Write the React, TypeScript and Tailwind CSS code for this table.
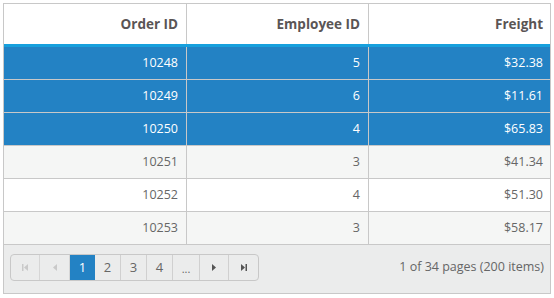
import React from "react";

const rows = [
  { id: "10248", emp: "5", fr: "$32.38", sel: true },
  { id: "10249", emp: "6", fr: "$11.61", sel: true },
  { id: "10250", emp: "4", fr: "$65.83", sel: true },
  { id: "10251", emp: "3", fr: "$41.34", sel: false, alt: true },
  { id: "10252", emp: "4", fr: "$51.30", sel: false, alt: false },
  { id: "10253", emp: "3", fr: "$58.17", sel: false, alt: true },
];

const FirstIcon = ({ c }: { c: string }) => (
  <svg width="6" height="7" viewBox="0 0 6 7">
    <rect x="0" y="0" width="1.5" height="7" fill={c} />
    <path d="M6 0 L2 3.5 L6 7 Z" fill={c} />
  </svg>
);
const PrevIcon = ({ c }: { c: string }) => (
  <svg width="4" height="7" viewBox="0 0 4 7">
    <path d="M4 0 L0 3.5 L4 7 Z" fill={c} />
  </svg>
);
const NextIcon = ({ c }: { c: string }) => (
  <svg width="4" height="7" viewBox="0 0 4 7">
    <path d="M0 0 L4 3.5 L0 7 Z" fill={c} />
  </svg>
);
const LastIcon = ({ c }: { c: string }) => (
  <svg width="6" height="7" viewBox="0 0 6 7">
    <path d="M0 0 L4 3.5 L0 7 Z" fill={c} />
    <rect x="4.5" y="0" width="1.5" height="7" fill={c} />
  </svg>
);

export default function App() {
  const font = { fontFamily: '"Open Sans", "Noto Sans", sans-serif' };
  return (
    <div className="p-[3px] bg-white" style={font}>
      <div className="w-[548px] border border-[#c8c8c8] bg-white">
        {/* header */}
        <div className="grid grid-cols-[183px_182px_181px] h-[43px] border-b-[3px] border-[#17a0dd] text-[13.5px] font-bold text-[#5a5555]">
          <div className="flex items-center justify-end pr-[8px] border-r border-[#c8c8c8]">Order ID</div>
          <div className="flex items-center justify-end pr-[8px] border-r border-[#c8c8c8]">Employee ID</div>
          <div className="flex items-center justify-end pr-[7px]">Freight</div>
        </div>
        {rows.map((r) => {
          const bg = r.sel ? "bg-[#2382c4] text-white" : r.alt ? "bg-[#f5f6f5] text-[#666]" : "bg-white text-[#666]";
          return (
            <div key={r.id} className={`grid grid-cols-[183px_182px_181px] h-[33px] border-b border-[#c8c8c8] text-[12.5px] ${bg}`}>
              <div className="flex items-center justify-end pr-[8px] border-r border-[#c8c8c8]">{r.id}</div>
              <div className="flex items-center justify-end pr-[8px] border-r border-[#c8c8c8]">{r.emp}</div>
              <div className="flex items-center justify-end pr-[7px]">{r.fr}</div>
            </div>
          );
        })}
        {/* pager */}
        <div className="h-[48px] bg-[#ebecec] flex items-start justify-between pl-[6px] pr-[6px] pt-[9px]">
          <div className="flex h-[27px] border border-[#c8c8c8] rounded-[4px] overflow-hidden text-[13px] text-[#666]">
            <div className="w-[29px] flex items-center justify-center border-r border-[#d6d6d6]">
              <FirstIcon c="#c9c9c9" />
            </div>
            <div className="w-[30px] flex items-center justify-center border-r border-[#d6d6d6]">
              <PrevIcon c="#c9c9c9" />
            </div>
            <div className="w-[25px] flex items-center justify-center bg-[#2382c4] text-white">1</div>
            <div className="w-[26px] flex items-center justify-center border-r border-[#d0d0d0]">2</div>
            <div className="w-[26px] flex items-center justify-center border-r border-[#d0d0d0]">3</div>
            <div className="w-[26px] flex items-center justify-center border-r border-[#d0d0d0]">4</div>
            <div className="w-[27px] flex items-center justify-center border-r border-[#d0d0d0] text-[11px] pt-[3px]">...</div>
            <div className="w-[29px] flex items-center justify-center border-r border-[#d0d0d0]">
              <NextIcon c="#555" />
            </div>
            <div className="w-[29px] flex items-center justify-center">
              <LastIcon c="#555" />
            </div>
          </div>
          <div className="h-[27px] flex items-center text-[12.5px] text-[#666]">1 of 34 pages (200 items)</div>
        </div>
      </div>
    </div>
  );
}
